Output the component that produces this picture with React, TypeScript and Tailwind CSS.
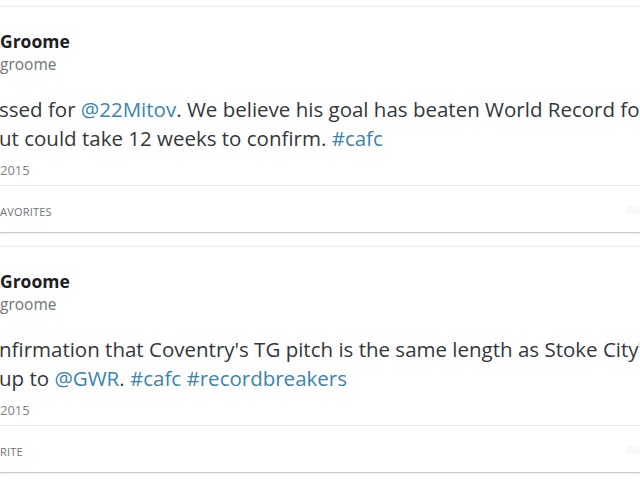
import React from 'react';

type Part = { text: string; link?: boolean };

const tweets: {
  name: string;
  handle: string;
  lines: Part[][];
  date: string;
  footer: string;
}[] = [
  {
    name: 'Groome',
    handle: 'groome',
    lines: [
      [
        { text: 'ssed for ' },
        { text: '@22Mitov', link: true },
        { text: '. We believe his goal has beaten World Record fo' },
      ],
      [
        { text: 'ut could take 12 weeks to confirm. ' },
        { text: '#cafc', link: true },
      ],
    ],
    date: '2015',
    footer: 'AVORITES',
  },
  {
    name: 'Groome',
    handle: 'groome',
    lines: [
      [{ text: "nfirmation that Coventry's TG pitch is the same length as Stoke City's" }],
      [
        { text: 'up to ' },
        { text: '@GWR', link: true },
        { text: '. ' },
        { text: '#cafc', link: true },
        { text: ' ' },
        { text: '#recordbreakers', link: true },
      ],
    ],
    date: '2015',
    footer: 'RITE',
  },
];

const TweetCard = ({ tweet }: { tweet: (typeof tweets)[number] }) => (
  <div className="border-t border-b border-t-[#e6e9eb] border-b-[#c9cdd0] bg-white h-[227px] shadow-[0_1px_2px_rgba(0,0,0,0.08)] overflow-hidden">
    <div className="pt-[23px]">
      <div className="h-[22px] leading-[22px] text-[17.5px] font-bold text-[#1c2022] whitespace-nowrap">
        {tweet.name}
      </div>
      <div className="h-[24px] leading-[24px] text-[15.5px] text-[#707478] whitespace-nowrap">
        {tweet.handle}
      </div>
      <div className="mt-[19px] text-[20.5px] leading-[29px] text-[#33373a] whitespace-nowrap">
        {tweet.lines.map((line, i) => (
          <div key={i} className={i === 1 ? '-ml-[1px]' : '-ml-[1px]'}>
            {line.map((p, j) =>
              p.link ? (
                <span key={j} className="text-[#3a84b0]">
                  {p.text}
                </span>
              ) : (
                <span key={j}>{p.text}</span>
              )
            )}
          </div>
        ))}
      </div>
      <div className="mt-[7px] h-[20px] leading-[20px] text-[13px] text-[#7d8184]">
        {tweet.date}
      </div>
      <div className="mt-[5px] border-t border-[#e4e7e9]" />
      <div className="pt-[19px] h-[46px] leading-[14px] text-[11px] tracking-[0.2px] text-[#6f7376] flex justify-between">
        <span>{tweet.footer}</span>
        <span className="w-[14px] h-[8px] mt-[1px] bg-[#f7f8f9] rounded-sm" />
      </div>
    </div>
  </div>
);

export default function App() {
  return (
    <div
      className="w-[640px] h-[480px] bg-white overflow-hidden pt-[6px] flex flex-col gap-[13px]"
      style={{ fontFamily: '"Open Sans", "Noto Sans", sans-serif' }}
    >
      {tweets.map((t, i) => (
        <TweetCard key={i} tweet={t} />
      ))}
    </div>
  );
}
